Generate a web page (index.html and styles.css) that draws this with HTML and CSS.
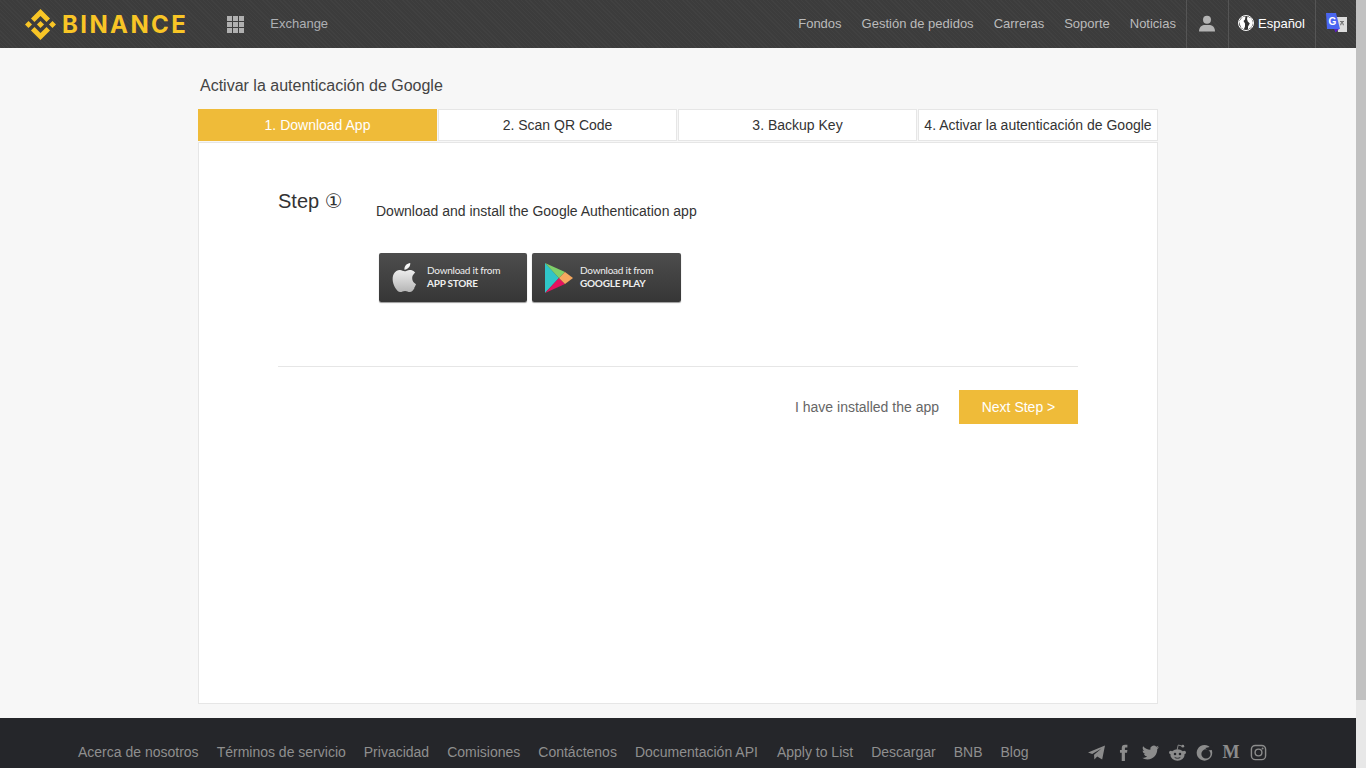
FILE: index.html
```html
<!DOCTYPE html>
<html lang="en">
<head>
    <meta charset="UTF-8">
    <title>Binance - Activar la autenticación de Google</title>
    <link rel="stylesheet" href="styles.css">
</head>
<body>
<div class="page">
    <header class="topbar">
        <a class="logo">
            <svg class="logo-mark" viewBox="0 0 126.61 126.61"><path d="M38.73 53.2l24.59-24.58 24.6 24.6 14.3-14.31L63.32 0 24.42 38.9zM0 63.31l14.3-14.31 14.31 14.31-14.31 14.3zM38.73 73.41l24.59 24.59 24.6-24.6 14.31 14.29-38.9 38.91-38.91-38.88-.02-.02zM98.01 63.31l14.3-14.31 14.31 14.3-14.31 14.32zM77.83 63.3L63.32 48.78 52.59 59.51l-1.24 1.23-2.54 2.54 14.51 14.5 14.51-14.52z"/></svg>
            <span class="logo-text">BINANCE</span>
        </a>
        <svg class="apps" viewBox="0 0 17 17"><path d="M0 0h5v5H0zM6 0h5v5H6zM12 0h5v5h-5zM0 6h5v5H0zM6 6h5v5H6zM12 6h5v5h-5zM0 12h5v5H0zM6 12h5v5H6zM12 12h5v5h-5z"/></svg>
        <a class="exchange">Exchange</a>
        <nav class="topnav">
            <a>Fondos</a>
            <a>Gestión de pedidos</a>
            <a>Carreras</a>
            <a>Soporte</a>
            <a>Noticias</a>
        </nav>
        <div class="topcell user-cell">
            <svg class="user" viewBox="0 0 16 16"><circle cx="8" cy="4.200" r="4"/><path d="M0 16c0-4 2-6 5-6.600h6c3 .6 5 2.600 5 6.600z"/></svg>
        </div>
        <div class="topcell lang-cell">
            <svg class="globe" viewBox="0 0 16 16"><circle cx="8" cy="8" r="7.500" fill="#333" stroke="#fff"/><path fill="#fff" d="M1 6.500 4.500 2 7.500 1.500 7 4.500 5.500 6 7 8.500 7 11.500 5.800 14.500 3 12.500zM9.500 1.500 13.500 3.500 15 8 13.500 12 10 14.500 10 11.500 11.800 8.500 9.800 6.500 9 4z"/></svg>
            <span>Español</span>
        </div>
        <div class="topcell translate-cell">
            <svg class="translate" viewBox="0 0 21 20">
                <path fill="#dcdcdc" d="M10 4h11v15H12z"/>
                <path fill="#777" d="M14 8h4v1h-1.200l1.200 3-1 .4-1-2.400-1 2.400-1-.4 1.200-3H14z"/>
                <path fill="#4a66f0" d="M0 0h10l4 16H1z"/>
                <path fill="#5a1fc0" d="M8 16h5l-3.500 3.500z"/>
                <text class="translate-g" x="6.500" y="11.500">G</text>
            </svg>
        </div>
    </header>

    <main class="content">
        <h1 class="title">Activar la autenticación de Google</h1>
        <div class="tabs">
            <div class="tab active">1. Download App</div>
            <div class="tab">2. Scan QR Code</div>
            <div class="tab">3. Backup Key</div>
            <div class="tab last">4. Activar la autenticación de Google</div>
        </div>
        <section class="panel">
            <div class="step">
                <div class="step-label">Step <span class="step-num">①</span></div>
                <div class="step-body">
                    <p class="step-text">Download and install the Google Authentication app</p>
                    <div class="stores">
                        <a class="store">
                            <svg class="store-icon" viewBox="0 0 24 24"><defs><linearGradient id="apple" x1="0" y1="0" x2="0" y2="1"><stop offset="0" stop-color="#fff"/><stop offset="1" stop-color="#b5b5b5"/></linearGradient></defs><path fill="url(#apple)" d="M18.71 19.5c-.83 1.24-1.71 2.45-3.05 2.47-1.34.03-1.77-.79-3.29-.79-1.53 0-2 .77-3.27.82-1.31.05-2.3-1.32-3.14-2.53C4.25 17 2.94 12.45 4.7 9.39c.87-1.52 2.43-2.48 4.12-2.51 1.28-.02 2.5.87 3.29.87.78 0 2.21-1.07 3.73-.91.63.03 2.4.25 3.54 1.92-.09.06-2.11 1.24-2.09 3.7.03 2.94 2.58 3.92 2.61 3.93-.03.07-.41 1.4-1.19 2.61M13 3.5c.73-.83 1.94-1.46 2.94-1.5.13 1.17-.34 2.35-1.04 3.19-.69.85-1.83 1.51-2.95 1.42-.15-1.15.41-2.35 1.05-3.11z"/></svg>
                            <span class="store-text">Download it from<b>APP STORE</b></span>
                        </a>
                        <a class="store store-play">
                            <svg class="play-icon" viewBox="0 0 28 30">
                                <path fill="#2fc5c8" d="M0 0v30l14-15z"/>
                                <path fill="#7fd06a" d="M0 0l14 15 6-6z"/>
                                <path fill="#e5135f" d="M0 30l14-15 6 6z"/>
                                <path fill="#f5a85f" d="M20 9l-6 6 6 6 8-6z"/>
                            </svg>
                            <span class="store-text">Download it from<b>GOOGLE PLAY</b></span>
                        </a>
                    </div>
                </div>
            </div>
            <div class="step-actions">
                <span class="installed">I have installed the app</span>
                <a class="next-btn">Next Step &gt;</a>
            </div>
        </section>
    </main>

    <footer class="footer">
        <nav class="footer-links">
            <a>Acerca de nosotros</a>
            <a>Términos de servicio</a>
            <a>Privacidad</a>
            <a>Comisiones</a>
            <a>Contáctenos</a>
            <a class="wide">Documentación API</a>
            <a>Apply to List</a>
            <a>Descargar</a>
            <a>BNB</a>
            <a>Blog</a>
        </nav>
        <div class="social">
            <svg viewBox="0 0 24 24"><path d="M0 12 24 2 20 22 13 17.500 9 22 8.500 15 19 6.500 6 14z"/></svg>
            <svg viewBox="0 0 24 24"><path d="M14 8.500h3.500L17 12.500h-3V24H9.500V12.500H7v-4h2.500V6C9.500 2.500 11 1 14.200 1H17.500v4h-2C14.300 5 14 5.500 14 6.500z"/></svg>
            <svg viewBox="0 0 24 24"><path d="M23.953 4.57a10 10 0 01-2.825.775 4.958 4.958 0 002.163-2.723c-.951.555-2.005.959-3.127 1.184a4.92 4.92 0 00-8.384 4.482C7.69 8.095 4.067 6.13 1.64 3.162a4.822 4.822 0 00-.666 2.475c0 1.71.87 3.213 2.188 4.096a4.904 4.904 0 01-2.228-.616v.06a4.923 4.923 0 003.946 4.827 4.996 4.996 0 01-2.212.085 4.936 4.936 0 004.604 3.417 9.867 9.867 0 01-6.102 2.105c-.39 0-.779-.023-1.17-.067a13.995 13.995 0 007.557 2.209c9.053 0 13.998-7.496 13.998-13.985 0-.21 0-.42-.015-.63A9.935 9.935 0 0024 4.59z"/></svg>
            <svg viewBox="0 0 24 24"><ellipse cx="12" cy="15.500" rx="10" ry="8"/><circle cx="2.500" cy="12" r="2.500"/><circle cx="21.500" cy="12" r="2.500"/><circle cx="19.500" cy="3" r="2"/><path d="M11.500 8 13 1.500l5 1.200" fill="none" stroke="#8c8c8c" stroke-width="1.300"/><circle cx="8.500" cy="14" r="1.800" fill="#25262a"/><circle cx="15.500" cy="14" r="1.800" fill="#25262a"/><path d="M8 19c2.500 1.500 5.500 1.500 8 0" fill="none" stroke="#25262a" stroke-width="1.300"/></svg>
            <svg viewBox="0 0 24 24"><path fill-rule="evenodd" d="M12 1.500a11 11 0 1 1-.1 0zM14 7.500a6.500 6.500 0 1 0 .1 13 6.500 6.500 0 0 0-.1-13z"/><path fill="#25262a" d="M13 5.500 24 3v5l-7 1z"/></svg>
            <span class="medium">M</span>
            <svg viewBox="0 0 24 24"><rect x="2" y="2" width="20" height="20" rx="5.500" fill="none" stroke="#8c8c8c" stroke-width="2"/><circle cx="12" cy="12" r="4.800" fill="none" stroke="#8c8c8c" stroke-width="2"/><circle cx="17.800" cy="6.200" r="1.400"/></svg>
        </div>
    </footer>
</div>
<div class="scrollbar"><div class="scroll-thumb"></div></div>
</body>
</html>
```

FILE: styles.css
```css
/* Global */
html, body {
    height: 100%;
}

body {
    margin: 0;
    display: flex;
    height: 768px;
    overflow: hidden;
    font-family: "Liberation Sans", Arial, sans-serif;
    font-size: 14px;
    color: #333;
    background-color: #f7f7f7;
}

.page {
    flex: 1;
    min-width: 0;
    display: flex;
    flex-direction: column;
}

.scrollbar {
    width: 10px;
    background-color: #e8e8e8;
}

.scroll-thumb {
    height: 700px;
    background-color: #c1c1c1;
}

/* Top bar */
.topbar {
    height: 48px;
    flex: none;
    display: flex;
    align-items: center;
    background-color: #3c3c3c;
    background-image: repeating-linear-gradient(45deg, rgba(255, 255, 255, 0.025) 0 1px, transparent 1px 3px);
}

.logo {
    display: flex;
    align-items: center;
    margin-left: 25px;
    gap: 6px;
}

.logo-mark {
    width: 31px;
    height: 31px;
    fill: #f8c526;
}

.logo-text {
    font-family: Inter, sans-serif;
    font-weight: 700;
    font-size: 24px;
    letter-spacing: 2.4px;
    color: #f8c526;
}

.apps {
    width: 17px;
    height: 17px;
    margin-left: 39px;
    fill: #b0b0b0;
}

.exchange {
    margin-left: 26px;
    margin-top: -2px;
    font-size: 13px;
    color: #aeb0b4;
}

.topnav {
    display: flex;
    gap: 20px;
    margin-left: auto;
    margin-top: -2px;
    padding-right: 10px;
    font-size: 13px;
    color: #bbb;
}

.topcell {
    height: 48px;
    display: flex;
    align-items: center;
    border-left: 1px solid #555;
    box-sizing: border-box;
}

.user-cell {
    width: 42px;
    padding: 0 2px 2px 0;
    justify-content: center;
}

.user {
    width: 16px;
    height: 17px;
    fill: #b4b4b4;
}

.lang-cell {
    width: 87px;
    padding-left: 9px;
    padding-bottom: 2px;
    gap: 4px;
    font-size: 13px;
    color: #fff;
}

.globe {
    width: 16px;
    height: 16px;
}

.translate-cell {
    width: 41px;
    padding-left: 10px;
    padding-bottom: 2px;
}

.translate {
    width: 21px;
    height: 20px;
}

.translate-g {
    font-family: "Liberation Sans", sans-serif;
    font-size: 10px;
    font-weight: 700;
    text-anchor: middle;
    fill: #fff;
}

/* Main */
.content {
    flex: 1;
    width: 960px;
    margin-left: 198px;
    display: flex;
    flex-direction: column;
}

.title {
    margin: 29px 0 14px 2px;
    font-size: 16px;
    line-height: 18px;
    font-weight: 400;
    color: #444;
}

.tabs {
    display: flex;
    gap: 1px;
    margin-bottom: 1px;
}

.tab {
    width: 239px;
    flex: none;
    box-sizing: border-box;
    height: 32px;
    line-height: 30px;
    text-align: center;
    white-space: nowrap;
    background-color: #fff;
    border: 1px solid #e6e6e6;
    color: #333;
}

.tab.last {
    width: 240px;
}

.tab.active {
    background-color: #efbb39;
    border-color: #efbb39;
    color: #fff;
}

.panel {
    height: 562px;
    box-sizing: border-box;
    padding: 0 79px;
    background-color: #fff;
    border: 1px solid #e6e6e6;
}

.step {
    display: flex;
    height: 224px;
    padding-top: 46px;
    box-sizing: border-box;
    border-bottom: 1px solid #e6e6e6;
}

.step-label {
    width: 98px;
    font-size: 20px;
    line-height: 24px;
    color: #333;
}

.step-num {
    font-family: "DejaVu Sans", sans-serif;
    font-size: 20px;
}

.step-text {
    margin: 14px 0 0;
    line-height: 16px;
}

.stores {
    display: flex;
    gap: 5px;
    margin: 34px 0 0 3px;
}

.store {
    width: 148px;
    height: 49px;
    box-sizing: border-box;
    display: flex;
    align-items: center;
    border-radius: 2px;
    background: linear-gradient(#4d4d4d, #363636);
    box-shadow: 0 1px 1px rgba(0, 0, 0, 0.4);
}

.store-play {
    width: 149px;
}

.store-icon {
    width: 35px;
    height: 35px;
    margin-left: 8px;
    margin-right: 5px;
}

.play-icon {
    width: 28px;
    height: 30px;
    margin-left: 13px;
    margin-right: 7px;
}

.store-text {
    display: flex;
    flex-direction: column;
    gap: 1px;
    margin-top: -2px;
    font-family: Lato, sans-serif;
    font-size: 10px;
    line-height: 12px;
    letter-spacing: -0.25px;
    color: #eee;
}

.step-actions {
    display: flex;
    justify-content: flex-end;
    align-items: center;
    gap: 20px;
    margin-top: 23px;
}

.installed {
    color: #666;
}

.next-btn {
    width: 119px;
    height: 34px;
    line-height: 34px;
    text-align: center;
    background-color: #efbb39;
    color: #fff;
}

/* Footer */
.footer {
    height: 50px;
    margin-top: 14px;
    flex: none;
    display: flex;
    align-items: flex-start;
    background-color: #25262a;
    color: #8f8f8f;
}

.footer-links {
    display: flex;
    gap: 18px;
    margin: 26px 0 0 78px;
    line-height: 16px;
}

.footer-links .wide {
    padding-right: 1px;
}

.social {
    display: flex;
    align-items: center;
    gap: 10px;
    height: 16px;
    margin: 26px 0 0 59px;
}

.social svg {
    width: 17px;
    height: 17px;
    fill: #8c8c8c;
}

.medium {
    width: 17px;
    text-align: center;
    font-family: "Liberation Serif", serif;
    font-weight: 700;
    font-size: 18px;
    color: #8c8c8c;
}
```
